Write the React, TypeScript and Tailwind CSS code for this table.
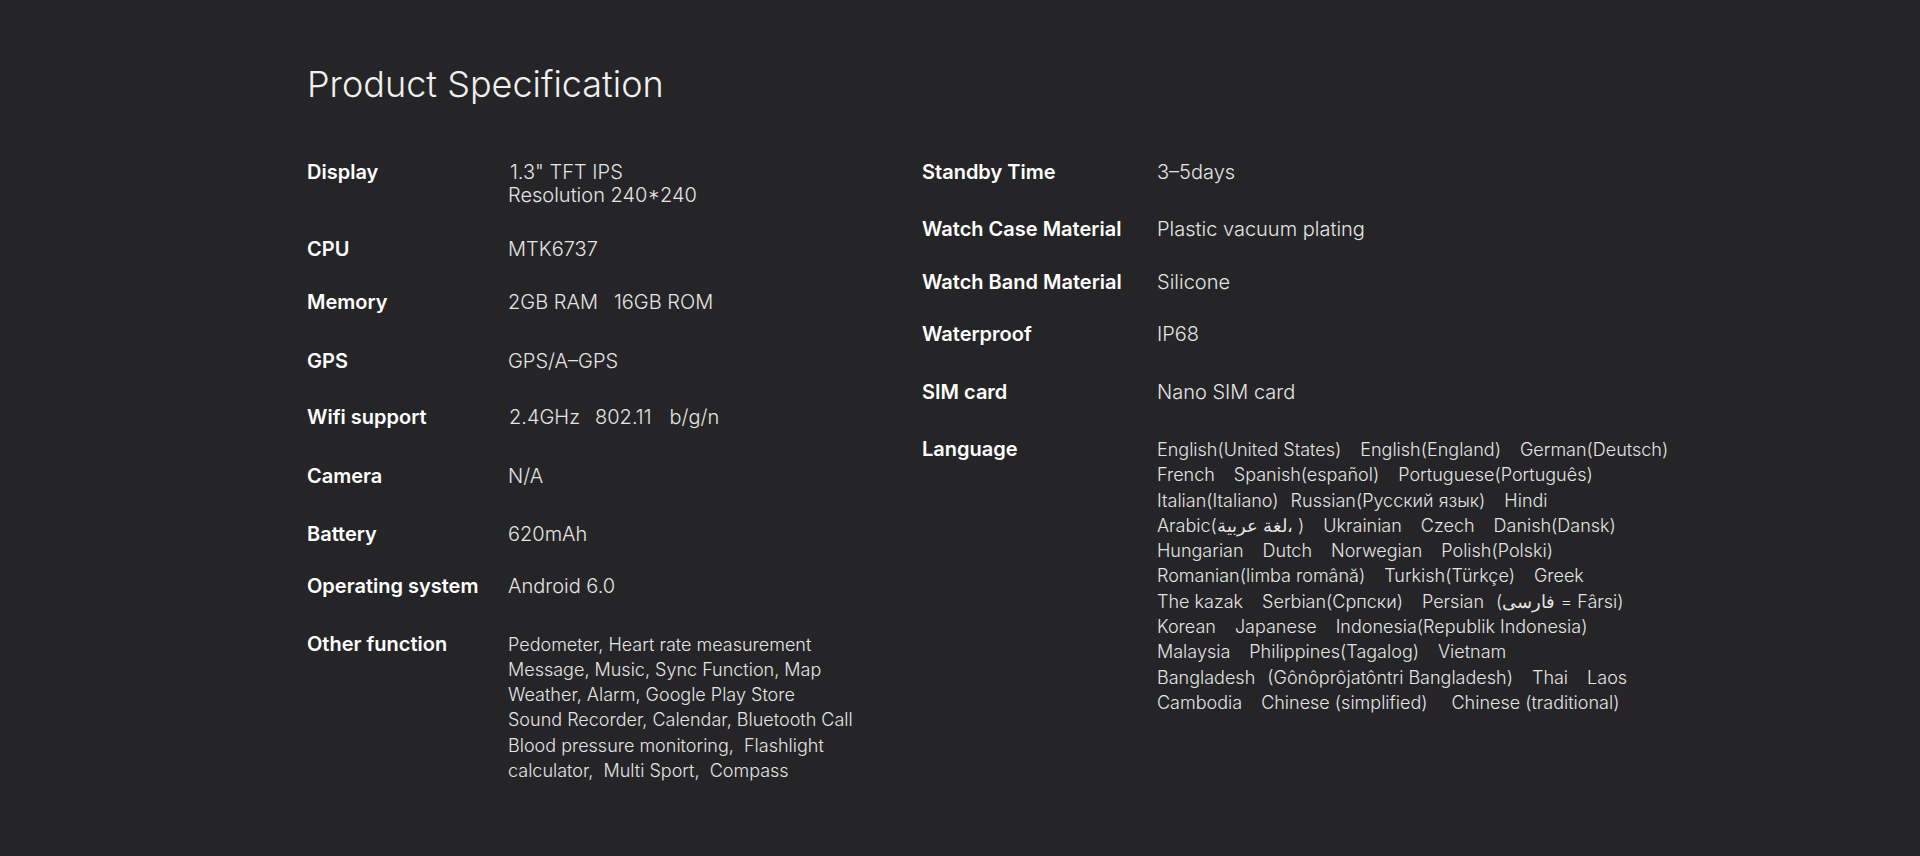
import React from "react";

const FONT = "font-['Inter','Noto_Sans','DejaVu_Sans',sans-serif]";

function Row({
  label,
  labelW,
  className,
  children,
}: {
  label: string;
  labelW: string;
  className: string;
  children: React.ReactNode;
}) {
  return (
    <div className={"flex items-baseline " + className}>
      <div className={labelW + " shrink-0 text-[20px] leading-[24px] font-semibold text-white"}>{label}</div>
      <div className="min-w-0">{children}</div>
    </div>
  );
}

function V({ children }: { children: React.ReactNode }) {
  return <div className="text-[20px] leading-[24px] font-light text-[#e4e4e4]">{children}</div>;
}

function Small({ lines }: { lines: React.ReactNode[] }) {
  return (
    <div className="text-[18px] leading-[25.3px] font-light text-[#e4e4e4]">
      {lines.map((l, i) => (
        <div key={i} className="whitespace-nowrap">
          {l}
        </div>
      ))}
    </div>
  );
}

function Line({ items }: { items: [string, string][] }) {
  return (
    <div className="flex whitespace-nowrap">
      {items.map(([t, c], i) => (
        <span key={i} className={c}>
          {t}
        </span>
      ))}
    </div>
  );
}

export default function App() {
  const L = "w-[201px]";
  const R = "w-[235px]";
  return (
    <div className={"min-h-screen w-full bg-[#252527] pl-[307px] pt-[66px] pb-[60px] " + FONT}>
      <h1 className="text-[36px] leading-[36px] font-light text-[#f0f0f0]">Product Specification</h1>
      <div className="mt-[57px] flex">
        <div className="w-[615px] shrink-0 pt-[1px]">
          <Row label="Display" labelW={L} className="">
            <div className="text-[20px] leading-[23.3px] font-light text-[#e4e4e4]">
              <div className="pl-[2px]">1.3" TFT IPS</div>
              <div>Resolution 240*240</div>
            </div>
          </Row>
          <Row label="CPU" labelW={L} className="mt-[29px]">
            <V>MTK6737</V>
          </Row>
          <Row label="Memory" labelW={L} className="mt-[29px]">
            <V>
              <span>2GB RAM</span>
              <span className="ml-[16px]">16GB ROM</span>
            </V>
          </Row>
          <Row label="GPS" labelW={L} className="mt-[35px]">
            <V>GPS/A–GPS</V>
          </Row>
          <Row label="Wifi support" labelW={L} className="mt-[32px]">
            <V>
              <span className="pl-[1px]">2.4GHz</span>
              <span className="ml-[15px]">802.11</span>
              <span className="ml-[18px]">b/g/n</span>
            </V>
          </Row>
          <Row label="Camera" labelW={L} className="mt-[35px]">
            <V>N/A</V>
          </Row>
          <Row label="Battery" labelW={L} className="mt-[34px]">
            <V>620mAh</V>
          </Row>
          <Row label="Operating system" labelW={L} className="mt-[28px]">
            <V>Android 6.0</V>
          </Row>
          <Row label="Other function" labelW={L} className="mt-[34px]">
            <Small
              lines={[
                "Pedometer, Heart rate measurement",
                "Message, Music, Sync Function, Map",
                "Weather, Alarm, Google Play Store",
                "Sound Recorder, Calendar, Bluetooth Call",
                "Blood pressure monitoring,  Flashlight",
                "calculator,  Multi Sport,  Compass",
              ].map((s) => (
                <span className="whitespace-pre">{s}</span>
              ))}
            />
          </Row>
        </div>

        <div className="flex-1 pt-[1px]">
          <Row label="Standby Time" labelW={R} className="">
            <V>3–5days</V>
          </Row>
          <Row label="Watch Case Material" labelW={R} className="mt-[33px]">
            <V>Plastic vacuum plating</V>
          </Row>
          <Row label="Watch Band Material" labelW={R} className="mt-[29px]">
            <V>Silicone</V>
          </Row>
          <Row label="Waterproof" labelW={R} className="mt-[28px]">
            <V>IP68</V>
          </Row>
          <Row label="SIM card" labelW={R} className="mt-[34px]">
            <V>Nano SIM card</V>
          </Row>
          <Row label="Language" labelW={R} className="mt-[33px]">
            <div className="text-[18px] leading-[25.3px] font-light text-[#e4e4e4]">
              <Line
                items={[
                  ["English(United States)", ""],
                  ["English(England)", "ml-[19px]"],
                  ["German(Deutsch)", "ml-[19px]"],
                ]}
              />
              <Line
                items={[
                  ["French", ""],
                  ["Spanish(español)", "ml-[19px]"],
                  ["Portuguese(Português)", "ml-[19px]"],
                ]}
              />
              <Line
                items={[
                  ["Italian(Italiano)", ""],
                  ["Russian(Русский язык)", "ml-[12px]"],
                  ["Hindi", "ml-[19px]"],
                ]}
              />
              <Line
                items={[
                  ["Arabic(لغة عربية، )", ""],
                  ["Ukrainian", "ml-[19px]"],
                  ["Czech", "ml-[19px]"],
                  ["Danish(Dansk)", "ml-[19px]"],
                ]}
              />
              <Line
                items={[
                  ["Hungarian", ""],
                  ["Dutch", "ml-[19px]"],
                  ["Norwegian", "ml-[19px]"],
                  ["Polish(Polski)", "ml-[19px]"],
                ]}
              />
              <Line
                items={[
                  ["Romanian(limba română)", ""],
                  ["Turkish(Türkçe)", "ml-[19px]"],
                  ["Greek", "ml-[19px]"],
                ]}
              />
              <Line
                items={[
                  ["The kazak", ""],
                  ["Serbian(Српски)", "ml-[19px]"],
                  ["Persian", "ml-[19px]"],
                  ["(فارسی = Fârsi)", "ml-[12px]"],
                ]}
              />
              <Line
                items={[
                  ["Korean", ""],
                  ["Japanese", "ml-[19px]"],
                  ["Indonesia(Republik Indonesia)", "ml-[19px]"],
                ]}
              />
              <Line
                items={[
                  ["Malaysia", ""],
                  ["Philippines(Tagalog)", "ml-[19px]"],
                  ["Vietnam", "ml-[19px]"],
                ]}
              />
              <Line
                items={[
                  ["Bangladesh", ""],
                  ["(Gônôprôjatôntri Bangladesh)", "ml-[12px]"],
                  ["Thai", "ml-[19px]"],
                  ["Laos", "ml-[19px]"],
                ]}
              />
              <Line
                items={[
                  ["Cambodia", ""],
                  ["Chinese (simplified)", "ml-[19px]"],
                  ["Chinese (traditional)", "ml-[24px]"],
                ]}
              />
            </div>
          </Row>
        </div>
      </div>
    </div>
  );
}
